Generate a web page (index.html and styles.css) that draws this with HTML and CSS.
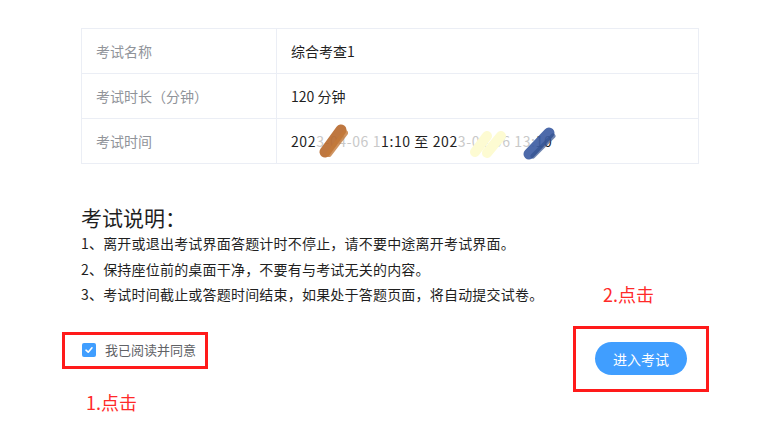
FILE: index.html
```html
<!DOCTYPE html>
<html lang="zh-CN">
<head>
<meta charset="utf-8">
<title>考试说明</title>
<link rel="stylesheet" href="styles.css">
</head>
<body>
<div class="page">
  <table class="info">
    <tr><td class="label">考试名称</td><td class="value">综合考查1</td></tr>
    <tr><td class="label">考试时长（分钟）</td><td class="value">120 分钟</td></tr>
    <tr><td class="label">考试时间</td><td class="value"><span class="date">202<span class="fade">3</span><span class="fade">-04-06 1</span>1:10 至 202<span class="fade">3-04-06 13:</span>10<svg class="scribble" width="300" height="50" viewBox="0 0 300 50"><path d="M34 36 L50 14" stroke="#b8692c" stroke-width="11" stroke-linecap="round" opacity="0.9"/><path d="M38 38 L54 17" stroke="#c47a3a" stroke-width="6" stroke-linecap="round" opacity="0.8"/><path d="M184 36 L196 20 M196 37 L210 20" stroke="#fdfbd2" stroke-width="10" stroke-linecap="round"/><path d="M238 38 L258 17" stroke="#3e5ea3" stroke-width="11" stroke-linecap="round" opacity="0.92"/><path d="M242 40 L262 20" stroke="#34528f" stroke-width="5" stroke-linecap="round" opacity="0.7"/></svg></span></td></tr>
  </table>

  <div class="notice">
    <h2 class="notice-title">考试说明：</h2>
    <p class="notice-item">1、离开或退出考试界面答题计时不停止，请不要中途离开考试界面。</p>
    <p class="notice-item">2、保持座位前的桌面干净，不要有与考试无关的内容。</p>
    <p class="notice-item">3、考试时间截止或答题时间结束，如果处于答题页面，将自动提交试卷。</p>
  </div>
</div>

<div class="actions">
  <div class="mark mark-left">
    <label class="agree"><span class="checkbox"><svg width="10" height="10" viewBox="0 0 10 10"><path d="M2 5.2 L4.2 7.2 L8 2.8" stroke="#fff" stroke-width="1.6" fill="none" stroke-linecap="round" stroke-linejoin="round"/></svg></span><span class="agree-text">我已阅读并同意</span></label>
    <span class="tip tip-1">1.点击</span>
  </div>
  <div class="mark mark-right">
    <button class="enter">进入考试</button>
    <span class="tip tip-2">2.点击</span>
  </div>
</div>
</body>
</html>
```

FILE: styles.css
```css
* { box-sizing: border-box; }
html, body { margin: 0; padding: 0; background: #fff; }
body {
  font-family: "Noto Sans CJK SC", "Noto Sans", sans-serif;
  color: #303133;
  width: 762px;
  height: 447px;
  overflow: hidden;
}
.page { padding: 28px 63px 0 81px; }

.info {
  width: 618px;
  border-collapse: collapse;
  font-size: 14px;
}
.info td {
  border: 1px solid #ebeef5;
  height: 45px;
  padding: 0 14px;
  line-height: 20px;
}
.info .label { width: 195px; color: #909399; }
.info .value { color: #1f1f1f; }
.date { position: relative; display: inline-block; letter-spacing: 0.6px; }
.fade { color: #c9c9c9; }
.scribble { position: absolute; left: 0; top: -15px; pointer-events: none; }

.notice { margin-top: 39px; }
.notice-title {
  margin: 0;
  font-size: 21px;
  font-weight: 400;
  line-height: 28px;
  color: #1f1f1f;
}
.notice-item {
  margin: 0;
  font-size: 14px;
  line-height: 25.5px;
  letter-spacing: 0.2px;
  color: #1f1f1f;
}

.actions {
  display: flex;
  justify-content: space-between;
  align-items: flex-start;
  margin: 18px 53px 0 62px;
}
.mark { position: relative; border: 3px solid #ff1a1a; }
.mark-left {
  width: 146px;
  height: 37px;
  margin-top: 6px;
  display: flex;
  align-items: center;
  padding-left: 17px;
}
.mark-right {
  width: 136px;
  height: 66px;
  display: flex;
  align-items: center;
  justify-content: center;
}
.agree { display: flex; align-items: center; gap: 9px; cursor: pointer; }
.checkbox {
  width: 14px; height: 14px;
  border-radius: 2px;
  background: #409eff;
  display: flex; align-items: center; justify-content: center;
}
.agree-text { font-size: 13px; color: #606266; line-height: 18px; }
.enter {
  width: 92px; height: 33px;
  border: none;
  border-radius: 17px;
  background: #409eff;
  color: #fff;
  font-family: inherit;
  font-size: 14px;
  padding: 0;
  cursor: pointer;
}
.tip {
  position: absolute;
  color: #ff2a2a;
  font-size: 18px;
  line-height: 22px;
  white-space: nowrap;
}
.tip-1 { left: 21px; top: 56px; }
.tip-2 { left: 27px; top: -46px; }
```
